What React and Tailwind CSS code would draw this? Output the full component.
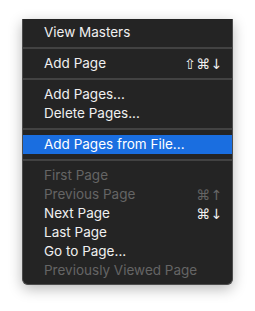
export default function App() {
  const Row = ({ label, sc, disabled, active }) => (
    <div
      className={`flex h-[19px] items-center justify-between pl-[21px] pr-[9px] text-[13.5px] leading-none ${
        active ? "bg-[#1a6ee0] text-white" : disabled ? "text-[#656565]" : "text-[#f0f0f0]"
      }`}
    >
      <span>{label}</span>
      {sc && (
        <span className="font-['DejaVu_Sans',sans-serif] text-[14px] tracking-[0.5px]">{sc}</span>
      )}
    </div>
  );
  const Sep = () => (
    <div className="py-[5px]">
      <div className="h-[2px] bg-[#424242]" />
    </div>
  );
  return (
    <div className="h-[311px] w-[255px] bg-white pt-[19px] font-['Inter',sans-serif]">
      <div className="ml-[22px] w-[211px] rounded-b-[6px] border-x border-b border-[#4d4d4d] bg-[#242424] pt-[4px] pb-[4px] shadow-[0_4px_14px_rgba(0,0,0,0.28)]">
        <Row label="View Masters" />
        <Sep />
        <Row label="Add Page" sc="⇧⌘↓" />
        <Sep />
        <Row label="Add Pages..." />
        <Row label="Delete Pages..." />
        <Sep />
        <Row label="Add Pages from File..." active />
        <Sep />
        <Row label="First Page" disabled />
        <Row label="Previous Page" sc="⌘↑" disabled />
        <Row label="Next Page" sc="⌘↓" />
        <Row label="Last Page" />
        <Row label="Go to Page..." />
        <Row label="Previously Viewed Page" disabled />
      </div>
    </div>
  );
}
